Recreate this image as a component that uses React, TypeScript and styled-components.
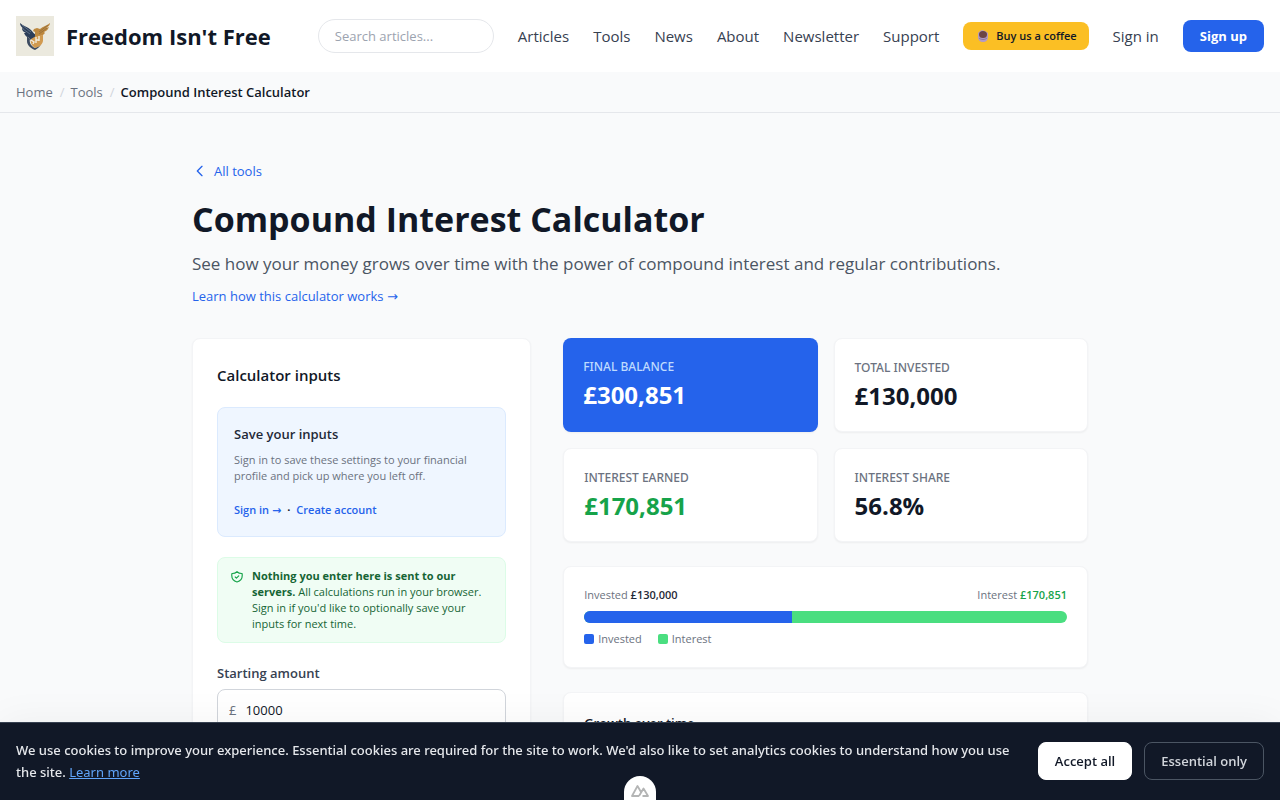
import React, { useState } from "react";
import styled, { createGlobalStyle } from "styled-components";

const GlobalStyle = createGlobalStyle`
  *, *::before, *::after { box-sizing: border-box; }
  body {
    margin: 0;
    background: #f9fafb;
    color: #111827;
    font-family: "Open Sans", "Noto Sans", sans-serif;
    font-size: 15px;
    line-height: 24px;
  }
  h1, h2, h3, p, dl, dd, dt, ol { margin: 0; padding: 0; }
  a { color: inherit; text-decoration: none; }
  button, input { font: inherit; }
`;

const Header = styled.header`
  display: flex;
  align-items: center;
  justify-content: space-between;
  gap: 24px;
  height: 72px;
  padding: 0 16px;
  background: #fff;
`;

const Brand = styled.a`
  display: flex;
  align-items: center;
  gap: 12px;
  font-size: 22px;
  font-weight: 700;
  line-height: 32px;
  white-space: nowrap;
`;

const Nav = styled.nav`
  display: flex;
  align-items: center;
  gap: 24px;
  color: #374151;
  white-space: nowrap;
`;

const Search = styled.input`
  width: 176px;
  height: 34px;
  padding: 0 16px;
  border: 1px solid #e5e7eb;
  border-radius: 17px;
  background: #fff;
  font-size: 13px;
  &::placeholder { color: #9ca3af; opacity: 1; }
`;

const CoffeeLink = styled.a`
  display: flex;
  align-items: center;
  gap: 7px;
  height: 28px;
  padding: 0 12px 0 14px;
  border-radius: 8px;
  background: #fbbf24;
  color: #111827;
  font-size: 11px;
  font-weight: 600;
`;

const SignUp = styled.a`
  padding: 4px 17px;
  border-radius: 8px;
  background: #2563eb;
  color: #fff;
  font-size: 13px;
  font-weight: 700;
`;

const Breadcrumbs = styled.nav`
  padding: 10px 16px;
  border-bottom: 1px solid #e5e7eb;
  font-size: 13px;
  line-height: 20px;
  ol { display: flex; gap: 7px; list-style: none; }
  li { display: flex; gap: 6px; color: #6b7280; }
  li + li::before { content: "/"; color: #d1d5db; }
  [aria-current] { color: #111827; font-weight: 600; }
`;

const Main = styled.main`
  max-width: 896px;
  margin: 0 auto;
  padding: 48px 0 120px;
`;

const TextLink = styled.a`
  display: flex;
  align-items: center;
  gap: 6px;
  width: fit-content;
  color: #2563eb;
  font-size: 13px;
  line-height: 20px;
`;

const Title = styled.h1`
  margin-top: 16px;
  font-size: 34px;
  font-weight: 700;
  line-height: 45px;
`;

const Lead = styled.p`
  margin: 8px 0;
  color: #4b5563;
  font-size: 17px;
  line-height: 28px;
`;

const Arrow = styled.span`
  font-family: "DejaVu Sans", sans-serif;
  line-height: 1;
`;

const Columns = styled.div`
  display: grid;
  grid-template-columns: repeat(5, 1fr);
  align-items: start;
  gap: 32px;
  margin-top: 32px;
`;

const Card = styled.section<{ $pad?: number }>`
  padding: ${(p) => p.$pad ?? 20}px;
  border: 1px solid #f3f4f6;
  border-radius: 8px;
  background: #fff;
  box-shadow: 0 1px 2px rgba(0, 0, 0, 0.05);
`;

const InputsCard = styled(Card)`
  grid-column: span 2;
`;

const Results = styled.div`
  grid-column: span 3;
  display: grid;
  gap: 24px;
`;

const CardTitle = styled.h2<{ $small?: boolean }>`
  font-size: ${(p) => (p.$small ? 13 : 15)}px;
  font-weight: 600;
  line-height: ${(p) => (p.$small ? 20 : 24)}px;
`;

const SaveBox = styled.aside`
  margin-top: 20px;
  padding: 16px;
  border: 1px solid #dbeafe;
  border-radius: 8px;
  background: #eff6ff;
  font-size: 11px;
  line-height: 20px;
  h3 { color: #1f2937; }
  p { margin: 8px 0 16px; color: #6b7280; line-height: 16px; }
  a { color: #2563eb; font-weight: 600; }
`;

const SaveLinks = styled.div`
  display: flex;
  gap: 6px;
  font-weight: 700;
`;

const PrivacyBox = styled.aside`
  display: flex;
  gap: 8px;
  margin-top: 20px;
  padding: 10px 12px;
  border: 1px solid #dcfce7;
  border-radius: 8px;
  background: #f0fdf4;
  color: #166534;
  font-size: 11px;
  line-height: 16px;
  svg { flex: none; margin-top: 2px; }
`;

const Label = styled.label`
  display: block;
  margin: 20px 0 6px;
  color: #374151;
  font-size: 13px;
  font-weight: 600;
  line-height: 20px;
`;

const MoneyField = styled.div`
  display: flex;
  align-items: center;
  gap: 9px;
  height: 42px;
  padding: 0 11px;
  border: 1px solid #d1d5db;
  border-radius: 8px;
  color: #6b7280;
  font-size: 13px;
  input {
    flex: 1;
    min-width: 0;
    padding: 0;
    border: 0;
    outline: 0;
    background: transparent;
    color: #111827;
  }
`;

const Stats = styled.dl`
  display: grid;
  grid-template-columns: 1fr 1fr;
  gap: 16px;
`;

const Stat = styled.div<{ $primary?: boolean; $good?: boolean }>`
  padding: 21px 20px 19px;
  border: ${(p) => (p.$primary ? "0" : "1px solid #f3f4f6")};
  border-radius: 8px;
  background: ${(p) => (p.$primary ? "#2563eb" : "#fff")};
  box-shadow: 0 1px 2px rgba(0, 0, 0, 0.05);
  dt {
    color: ${(p) => (p.$primary ? "#bfdbfe" : "#6b7280")};
    font-family: "Noto Sans", sans-serif;
    font-size: 12px;
    font-weight: 500;
    line-height: 16px;
    text-transform: uppercase;
  }
  dd {
    margin-top: 4px;
    color: ${(p) => (p.$primary ? "#fff" : p.$good ? "#16a34a" : "#111827")};
    font-size: 24px;
    font-weight: 700;
    line-height: 32px;
  }
`;

const SplitRow = styled.div`
  display: flex;
  justify-content: space-between;
  color: #6b7280;
  font-size: 11px;
  line-height: 16px;
`;

const Amount = styled.span<{ $good?: boolean }>`
  color: ${(p) => (p.$good ? "#16a34a" : "#1f2937")};
  font-weight: 600;
`;

const Bar = styled.div`
  display: flex;
  height: 12px;
  margin: 8px 0;
  overflow: hidden;
  border-radius: 6px;
  background: #4ade80;
`;

const BarFill = styled.div`
  background: #2563eb;
`;

const Legend = styled.div`
  display: flex;
  gap: 16px;
  color: #6b7280;
  font-size: 11px;
  line-height: 16px;
`;

const LegendItem = styled.span<{ $color: string }>`
  display: flex;
  align-items: center;
  gap: 4px;
  &::before {
    content: "";
    width: 10px;
    height: 10px;
    border-radius: 2px;
    background: ${(p) => p.$color};
  }
`;

const CookieBar = styled.section`
  position: fixed;
  right: 0;
  bottom: 0;
  left: 0;
  display: flex;
  align-items: center;
  justify-content: space-between;
  gap: 24px;
  padding: 16px 16px 17px;
  border-top: 1px solid #374151;
  background: #111827;
  box-shadow: 0 0 40px rgba(0, 0, 0, 0.05);
  color: #e5e7eb;
  font-size: 13px;
  line-height: 22px;
  p { font-family: "Noto Sans", sans-serif; font-weight: 500; }
  a { color: #60a5fa; font-weight: 400; text-decoration: underline; }
`;

const CookieActions = styled.div`
  display: flex;
  flex: none;
  gap: 12px;
`;

const CookieButton = styled.button<{ $solid?: boolean }>`
  height: 38px;
  padding: 0 16px;
  border: 1px solid ${(p) => (p.$solid ? "#fff" : "#4b5563")};
  border-radius: 8px;
  background: ${(p) => (p.$solid ? "#fff" : "transparent")};
  color: ${(p) => (p.$solid ? "#111827" : "#d1d5db")};
  font-weight: 600;
`;

const DevToolsTab = styled.button`
  position: fixed;
  bottom: 0;
  left: 50%;
  display: flex;
  align-items: center;
  justify-content: center;
  width: 32px;
  height: 24px;
  padding: 6px 0 0;
  border: 0;
  border-radius: 16px 16px 0 0;
  background: #fff;
  transform: translateX(-50%);
`;

const EagleLogo = () => (
  <svg width="38" height="40" viewBox="0 0 38 40" aria-hidden="true">
    <rect width="38" height="40" fill="#ebe9de" />
    <path d="M4 7C7 10 12 11 15 14C17 16 18 18 20 19L19 23L15 24L12 21C10 21 9 19 8 17L10 17C7 16 6 14 6 12L8 13C5 11 4 9 4 7Z" fill="#2b3d59" />
    <path d="M6 9L15 16M7 13L14 18" stroke="#8094a8" strokeWidth="0.6" />
    <path d="M34 7C31 10 27 10 24 13L21 12L18 13L17 15L19 16L19 20L22 21L27 19L29 17L28 16C31 15 32 13 33 11L30 12C33 10 34 9 34 7Z" fill="#bd883f" />
    <path d="M32 9L23 16M31 12L23 18" stroke="#7f6139" strokeWidth="0.6" />
    <path d="M11 20L14 23C13 27 15 30 19 32L23 30L25 28C24 31 21 33 19 34C14 32 11 29 11 25Z" fill="#3d4b60" />
    <path d="M15 23L20 20L27 19V25C26 29 23 31 19 32C16 30 14 27 15 23Z" fill="#d19a50" />
    <path d="M15 24L18 26L17 28M20 21V27M23 20V25M20 24H23" stroke="#f1ebdc" strokeWidth="1.4" fill="none" />
  </svg>
);

const CoffeeIcon = () => (
  <svg width="12" height="14" viewBox="0 0 12 14" aria-hidden="true">
    <path d="M1 4L3 2L5 1L8 2L11 4V8C11 11 9 13 6 13C3 13 1 11 1 8Z" fill="#b39bc4" />
    <ellipse cx="6" cy="5.500" rx="4" ry="3.500" fill="#6d4545" />
    <path d="M2 9C4 11 8 11 10 9" stroke="#8d789f" fill="none" />
  </svg>
);

const ChevronLeft = () => (
  <svg width="16" height="16" viewBox="0 0 24 24" fill="none" stroke="currentColor" strokeWidth="2" strokeLinecap="round" strokeLinejoin="round" aria-hidden="true">
    <path d="M15 19l-7-7 7-7" />
  </svg>
);

const ShieldCheck = () => (
  <svg width="14" height="14" viewBox="0 0 24 24" fill="none" stroke="#16a34a" strokeWidth="2" strokeLinecap="round" strokeLinejoin="round" aria-hidden="true">
    <path d="M9 12l2 2 4-4m5.618-4.016A11.955 11.955 0 0112 2.944a11.955 11.955 0 01-8.618 3.04A12.02 12.02 0 003 9c0 5.591 3.824 10.29 9 11.622 5.176-1.332 9-6.03 9-11.622 0-1.042-.133-2.052-.382-3.016z" />
  </svg>
);

const NuxtMark = () => (
  <svg width="18" height="12" viewBox="0 0 18 12" fill="none" stroke="#b4b5b5" strokeWidth="1.8" strokeLinejoin="round" aria-hidden="true">
    <path d="M8 11H1L6.500 1L10 7M8 11L12.500 3.500L17 11H11.500" />
  </svg>
);

const links = ["Articles", "Tools", "News", "About", "Newsletter", "Support"];
const investedShare = 43;

export default function App() {
  const [amount, setAmount] = useState("10000");
  return (
    <>
      <GlobalStyle />
      <Header>
        <Brand href="#"><EagleLogo />Freedom Isn't Free</Brand>
        <Nav aria-label="Main">
          <Search type="search" aria-label="Search articles" placeholder="Search articles..." />
          {links.map((l) => <a key={l} href="#">{l}</a>)}
          <CoffeeLink href="#"><CoffeeIcon />Buy us a coffee</CoffeeLink>
          <a href="#">Sign in</a>
          <SignUp href="#">Sign up</SignUp>
        </Nav>
      </Header>
      <Breadcrumbs aria-label="Breadcrumb">
        <ol>
          <li><a href="#">Home</a></li>
          <li><a href="#">Tools</a></li>
          <li><span aria-current="page">Compound Interest Calculator</span></li>
        </ol>
      </Breadcrumbs>
      <Main>
        <TextLink href="#"><ChevronLeft />All tools</TextLink>
        <Title>Compound Interest Calculator</Title>
        <Lead>See how your money grows over time with the power of compound interest and regular contributions.</Lead>
        <TextLink href="#"><span>Learn how this calculator works <Arrow>→</Arrow></span></TextLink>
        <Columns>
          <InputsCard $pad={24}>
            <CardTitle>Calculator inputs</CardTitle>
            <SaveBox>
              <CardTitle as="h3" $small>Save your inputs</CardTitle>
              <p>Sign in to save these settings to your financial profile and pick up where you left off.</p>
              <SaveLinks>
                <a href="#">Sign in <Arrow>→</Arrow></a>
                <span>·</span>
                <a href="#">Create account</a>
              </SaveLinks>
            </SaveBox>
            <PrivacyBox>
              <ShieldCheck />
              <span><strong>Nothing you enter here is sent to our servers.</strong> All calculations run in your browser. Sign in if you'd like to optionally save your inputs for next time.</span>
            </PrivacyBox>
            <Label htmlFor="starting">Starting amount</Label>
            <MoneyField>
              <span>£</span>
              <input id="starting" inputMode="numeric" value={amount} onChange={(e) => setAmount(e.target.value)} />
            </MoneyField>
          </InputsCard>
          <Results>
            <Stats>
              <Stat $primary><dt>Final balance</dt><dd>£300,851</dd></Stat>
              <Stat><dt>Total invested</dt><dd>£130,000</dd></Stat>
              <Stat $good><dt>Interest earned</dt><dd>£170,851</dd></Stat>
              <Stat><dt>Interest share</dt><dd>56.8%</dd></Stat>
            </Stats>
            <Card>
              <SplitRow>
                <span>Invested <Amount>£130,000</Amount></span>
                <span>Interest <Amount $good>£170,851</Amount></span>
              </SplitRow>
              <Bar><BarFill style={{ width: `${investedShare}%` }} /></Bar>
              <Legend>
                <LegendItem $color="#2563eb">Invested</LegendItem>
                <LegendItem $color="#4ade80">Interest</LegendItem>
              </Legend>
            </Card>
            <Card><CardTitle $small>Growth over time</CardTitle></Card>
          </Results>
        </Columns>
      </Main>
      <CookieBar aria-label="Cookie consent">
        <p>We use cookies to improve your experience. Essential cookies are required for the site to work. We'd also like to set analytics cookies to understand how you use the site. <a href="#">Learn more</a></p>
        <CookieActions>
          <CookieButton $solid>Accept all</CookieButton>
          <CookieButton>Essential only</CookieButton>
        </CookieActions>
      </CookieBar>
      <DevToolsTab aria-label="Toggle devtools"><NuxtMark /></DevToolsTab>
    </>
  );
}
